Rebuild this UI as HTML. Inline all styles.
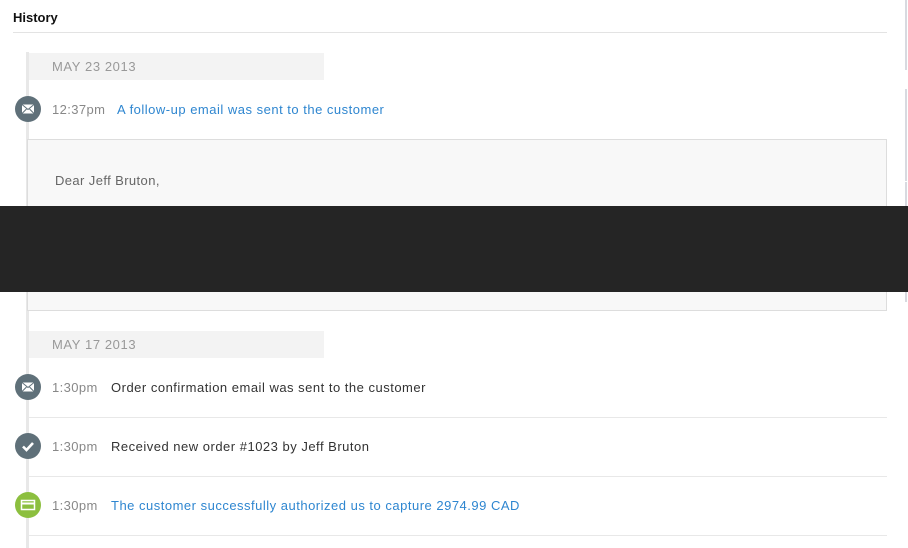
<!DOCTYPE html>
<html><head><style>
body{margin:0;width:908px;height:548px;background:#fff;font-family:"Liberation Sans",sans-serif;position:relative;overflow:hidden}
.a{position:absolute}
.t{font-size:13px;color:#888;letter-spacing:.4px}
.l{font-size:13px;color:#2e86d0;letter-spacing:.5px}
.d{font-size:13px;color:#333;letter-spacing:.5px}
.ic{position:absolute;width:26px;height:26px;border-radius:50%;background:#5f7079;left:15px}
</style></head><body>
<div class="a" style="left:13px;top:10px;font-size:13px;font-weight:bold;color:#111">History</div>
<div class="a" style="left:13px;top:32px;width:874px;height:1px;background:#e3e3e3"></div>
<div class="a" style="left:26px;top:52px;width:3px;height:496px;background:#e8e8e8"></div>
<div class="a" style="left:29px;top:53px;width:295px;height:27px;background:#f3f3f3"></div>
<div class="a t" style="left:52px;top:59px;color:#999;letter-spacing:.6px">MAY 23 2013</div>
<div class="ic" style="top:96px"><svg width="26" height="26"><rect x="7" y="8.5" width="12" height="9" fill="#fff"/><path d="M7 8.5l6 5 6-5M7 17.5l4.5-4.5M19 17.5l-4.5-4.5" stroke="#5f7079" stroke-width="1" fill="none"/></svg></div>
<div class="a t" style="left:52px;top:102px">12:37pm</div>
<div class="a l" style="left:117px;top:102px">A follow-up email was sent to the customer</div>
<div class="a" style="left:27px;top:139px;width:858px;height:170px;border:1px solid #ddd;background:#f8f8f8"></div>
<div class="a" style="left:55px;top:172px;font-size:13px;color:#666;line-height:18px;letter-spacing:.4px">Dear Jeff Bruton,<br><br>Hey Jeff. Thanks for the order.<br>Keep being awesome.<br><br>Shop One</div>
<div class="a" style="left:905px;top:0;width:2px;height:70px;background:#d8dae0"></div>
<div class="a" style="left:905px;top:89px;width:2px;height:92px;background:#d8dae0"></div>
<div class="a" style="left:905px;top:182px;width:2px;height:120px;background:#d8dae0"></div>
<div class="a" style="left:0;top:206px;width:908px;height:86px;background:#252525"></div>
<div class="a" style="left:29px;top:331px;width:295px;height:27px;background:#f3f3f3"></div>
<div class="a t" style="left:52px;top:337px;color:#999;letter-spacing:.6px">MAY 17 2013</div>
<div class="ic" style="top:374px"><svg width="26" height="26"><rect x="7" y="8.5" width="12" height="9" fill="#fff"/><path d="M7 8.5l6 5 6-5M7 17.5l4.5-4.5M19 17.5l-4.5-4.5" stroke="#5f7079" stroke-width="1" fill="none"/></svg></div>
<div class="a t" style="left:52px;top:380px">1:30pm</div>
<div class="a d" style="left:111px;top:380px">Order confirmation email was sent to the customer</div>
<div class="a" style="left:29px;top:417px;width:858px;height:1px;background:#e8e8e8"></div>
<div class="ic" style="top:433px"><svg width="26" height="26"><path d="M8 13.5l3.5 3.5 6.5-7" stroke="#fff" stroke-width="2.6" fill="none"/></svg></div>
<div class="a t" style="left:52px;top:439px">1:30pm</div>
<div class="a d" style="left:111px;top:439px">Received new order #1023 by Jeff Bruton</div>
<div class="a" style="left:29px;top:476px;width:858px;height:1px;background:#e8e8e8"></div>
<div class="ic" style="top:492px;background:#8cbf3f"><svg width="26" height="26"><rect x="6.5" y="8.5" width="13" height="9" fill="none" stroke="#fff" stroke-width="1.5"/><rect x="6.5" y="10.5" width="13" height="2" fill="#fff"/></svg></div>
<div class="a t" style="left:52px;top:498px">1:30pm</div>
<div class="a l" style="left:111px;top:498px">The customer successfully authorized us to capture 2974.99 CAD</div>
<div class="a" style="left:29px;top:535px;width:858px;height:1px;background:#e8e8e8"></div>
</body></html>
